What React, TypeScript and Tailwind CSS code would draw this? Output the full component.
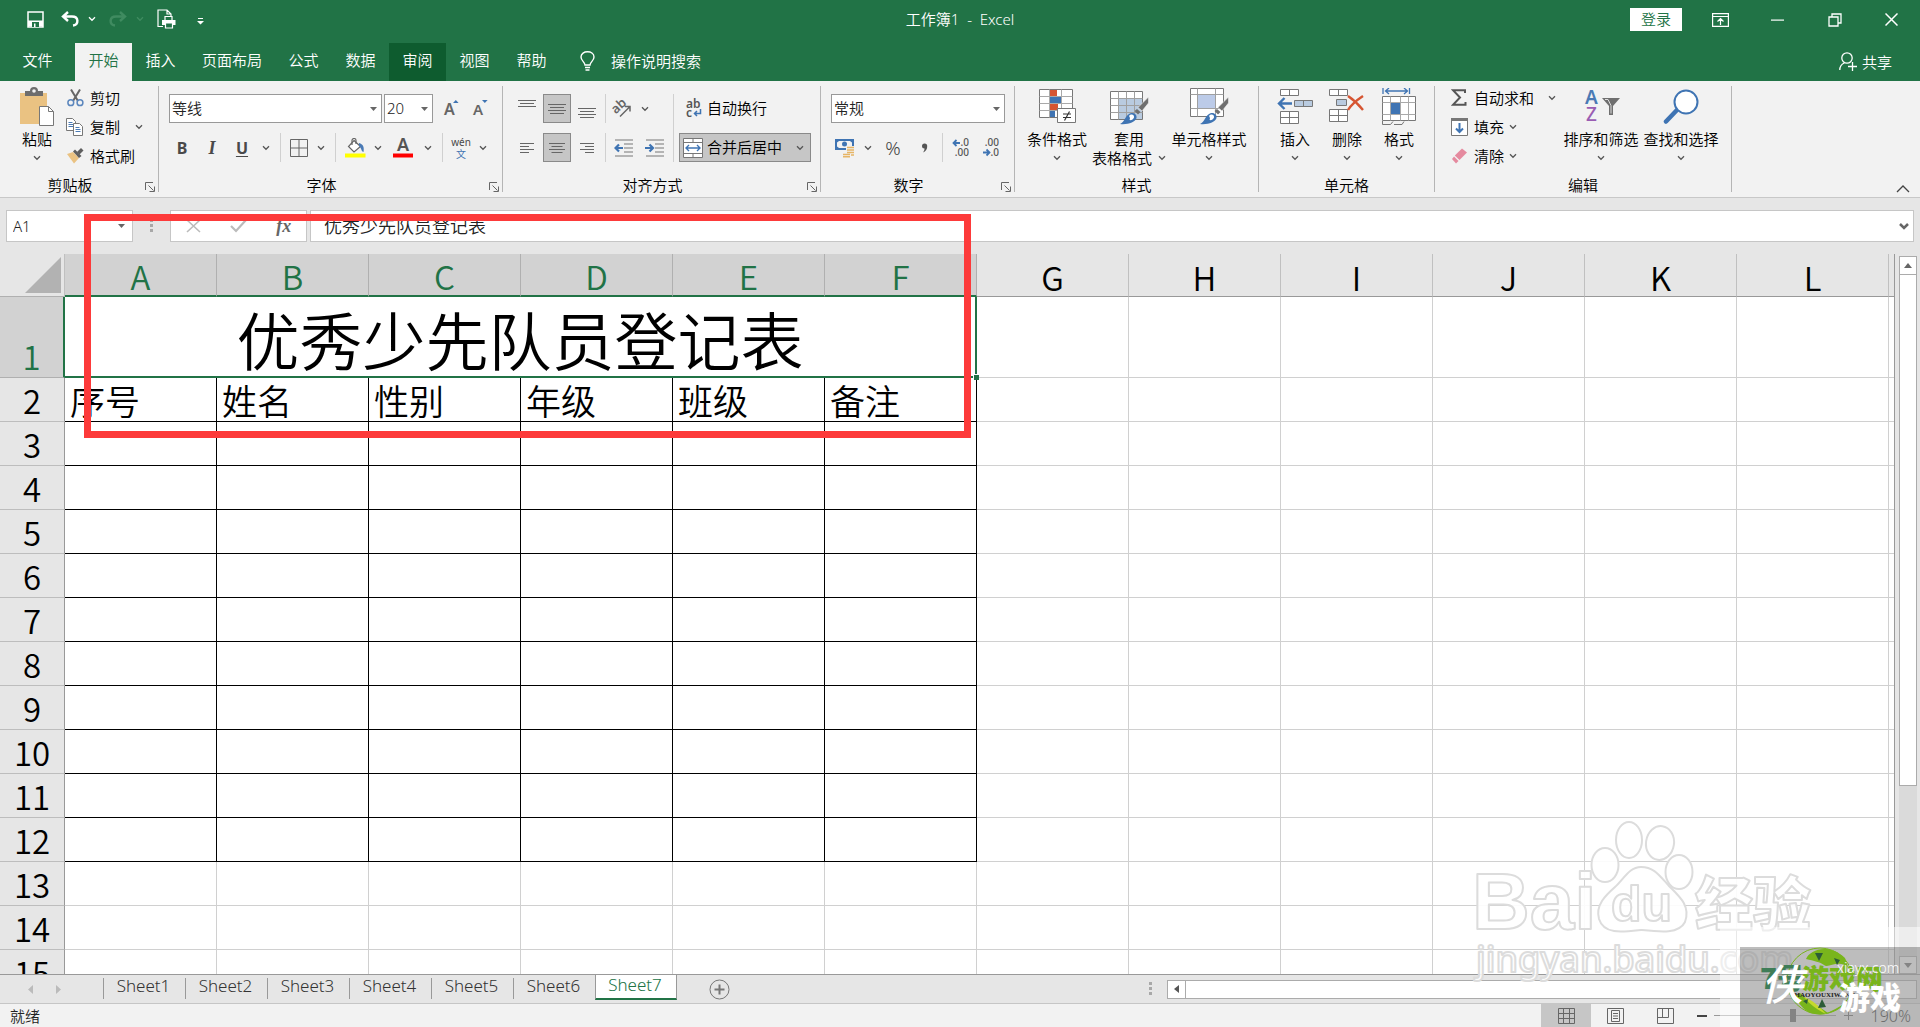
import type { ReactNode } from 'react';

const COLUMNS = ['A', 'B', 'C', 'D', 'E', 'F', 'G', 'H', 'I', 'J', 'K', 'L'];
const TABLE_COLUMNS = 6;
const TABLE_LAST_ROW = 12;
const TITLE = '优秀少先队员登记表';
const HEADINGS = ['序号', '姓名', '性别', '年级', '班级', '备注'];
const SHEETS = ['Sheet1', 'Sheet2', 'Sheet3', 'Sheet4', 'Sheet5', 'Sheet6', 'Sheet7'];

const TABS = [
  { label: '文件', className: 'w-[75px] text-white' },
  { label: '开始', className: 'w-[57px] bg-[#f2f2f2] text-[#217346]' },
  { label: '插入', className: 'w-[57px] text-white' },
  { label: '页面布局', className: 'w-[86px] text-white' },
  { label: '公式', className: 'w-[57px] text-white' },
  { label: '数据', className: 'w-[57px] text-white' },
  { label: '审阅', className: 'w-[57px] bg-[#0e5c2f] text-white' },
  { label: '视图', className: 'w-[57px] text-white' },
  { label: '帮助', className: 'w-[57px] text-white' },
];

/* ---------- small shared pieces ---------- */

function Chevron({ className = 'text-[#555]' }: { className?: string }) {
  return (
    <svg width="8" height="6" viewBox="0 0 8 6" className={className} fill="none" stroke="currentColor" strokeWidth="1.3">
      <path d="M1 1.3 4 4.3 7 1.3" />
    </svg>
  );
}

function Caret() {
  return (
    <svg width="7" height="4" viewBox="0 0 7 4" fill="#666">
      <path d="M0 0h7L3.5 4z" />
    </svg>
  );
}

function Drop({ label }: { label: string }) {
  return (
    <button type="button" aria-label={label} className="flex h-[29px] w-[18px] items-center justify-center">
      <Chevron />
    </button>
  );
}

function Tool({ label, width, active, children }: { label: string; width: string; active?: boolean; children: ReactNode }) {
  return (
    <button
      type="button"
      aria-label={label}
      className={`flex h-[29px] shrink-0 items-center justify-center ${width} ${active ? 'border border-[#8a8a8a] bg-[#c6c6c6]' : ''}`}
    >
      {children}
    </button>
  );
}

function Divider({ className }: { className: string }) {
  return <div className={`w-px shrink-0 bg-[#d0d0d0] ${className}`} />;
}

function Group({ label, width, launcher, children }: { label: string; width: string; launcher?: boolean; children: ReactNode }) {
  return (
    <section aria-label={label} className={`flex shrink-0 flex-col ${width}`}>
      <div className="flex h-[93px]">{children}</div>
      <div className="flex h-[22px] items-center">
        <span className="flex-1 text-center">{label}</span>
        {launcher && (
          <button type="button" aria-label={`${label}设置`} className="flex w-[18px] pt-1">
            <svg width="10" height="10" viewBox="0 0 10 10" fill="none" stroke="#666" strokeWidth="1" className="ml-[5px]">
              <path d="M.5 8V.5H8M3.5 3.5l5 5M9.5 4.5v5h-5" />
            </svg>
          </button>
        )}
      </div>
    </section>
  );
}

function GroupDivider() {
  return <div className="my-[5px] w-px shrink-0 bg-[#b5b5b5]" />;
}

function BigButton({ icon, label, second, width }: { icon: ReactNode; label: string; second?: string; width: string }) {
  return (
    <button type="button" className={`flex shrink-0 flex-col items-center pt-[3px] ${width}`}>
      <span className="flex h-[46px] items-center">{icon}</span>
      <span className="h-[18px] leading-[18px] whitespace-nowrap">{label}</span>
      <span className="flex h-[20px] items-center gap-1.5 leading-[18px] whitespace-nowrap">
        {second}
        <Chevron />
      </span>
    </button>
  );
}

function SmallButton({ icon, label, drop }: { icon: ReactNode; label: string; drop?: string }) {
  return (
    <button type="button" className="flex h-[29px] items-center whitespace-nowrap">
      <span className="mr-[6px] flex w-[18px] justify-center">{icon}</span>
      {label}
      {drop && (
        <span className={drop}>
          <Chevron />
        </span>
      )}
    </button>
  );
}

/* ---------- ribbon icons ---------- */

function PasteIcon() {
  return (
    <svg width="36" height="40" viewBox="0 0 36 40">
      <path d="M1 6h27v31H1z" fill="#eac282" />
      <path d="M6 4h5a4 4 0 0 1 8 0h5v5H6z" fill="#6d6d6d" />
      <circle cx="15" cy="4" r="1.8" fill="#f2f2f2" />
      <path d="M20.500 19.500h9l5 5v14h-14z" fill="#fff" stroke="#777" />
      <path d="M29.500 19.500v5h5" fill="none" stroke="#777" />
    </svg>
  );
}

function CutIcon() {
  return (
    <svg width="17" height="18" viewBox="0 0 17 18" fill="none">
      <path d="M4 .5 11 12M13 .5 6 12" stroke="#666" strokeWidth="2" />
      <circle cx="3.800" cy="13.700" r="2.900" stroke="#5b86bd" strokeWidth="1.500" />
      <circle cx="13" cy="13.700" r="2.900" stroke="#5b86bd" strokeWidth="1.500" />
    </svg>
  );
}

function CopyIcon() {
  return (
    <svg width="18" height="18" viewBox="0 0 18 18" fill="#fff" stroke="#777">
      <path d="M.5.5h6l3 3v9h-9z" />
      <path d="M2.500 4.500h4M2.500 6.500h5M2.500 8.500h5" stroke="#4a7ab5" />
      <path d="M7.500 5.500h6l3 3v9h-9z" />
      <path d="M9.500 9.500h4M9.500 11.500h5M9.500 13.500h5" stroke="#4a7ab5" />
    </svg>
  );
}

function BrushIcon() {
  return (
    <svg width="18" height="16" viewBox="0 0 18 16">
      <path d="M1 6 7 4l6 6-5 5.500z" fill="#eac282" />
      <path d="M7 3.500 9 1.500l6.500 6.500-2.500 2z" fill="#5f5f5f" />
      <path d="m11 4 4-4 2.500 2.500-4 4z" fill="#5f5f5f" />
    </svg>
  );
}

function BordersIcon() {
  return (
    <svg width="18" height="18" viewBox="0 0 18 18" fill="none" stroke="#666" strokeWidth="1">
      <path d="M.5.5h17v17H.5zM9 .5v17M.5 9h17" />
    </svg>
  );
}

function FillColorIcon() {
  return (
    <svg width="21" height="20" viewBox="0 0 21 20">
      <path d="m9 2.500 6.500 6L9 14 3.500 8.500z" fill="#fff" stroke="#666" strokeWidth="1.200" />
      <path d="M7 7V2.500a2 2 0 0 1 4 0V6" fill="none" stroke="#666" strokeWidth="1.200" />
      <path d="M14 5c4 1 5.500 4 4.500 9-2 0-2-4-4.500-6z" fill="#4a7ab5" />
      <path d="M0 15.500h20.500v4H0z" fill="#ff0" />
    </svg>
  );
}

function linesIcon(widths: number[], align: 'left' | 'center' | 'right', offset = 0) {
  return (
    <svg width="18" height="24" viewBox="0 0 18 24" stroke="#666" strokeWidth="1">
      {widths.map((w, i) => {
        const x = align === 'left' ? 2 : align === 'center' ? (18 - w) / 2 : 16 - w;
        return <path key={i} d={`M${x} ${offset + i * 3 + 0.5}h${w}`} />;
      })}
    </svg>
  );
}

function OrientationIcon() {
  return (
    <svg width="20" height="19" viewBox="0 0 20 19" className="overflow-visible">
      <text x="2" y="13" transform="rotate(-42 6 12)" className="fill-[#666] font-['Noto_Sans',sans-serif] text-[13px] font-semibold">
        ab
      </text>
      <path d="M8 17.500 17.500 8M13 7.500h5v5" fill="none" stroke="#666" strokeWidth="1.500" />
    </svg>
  );
}

function IndentIcon({ increase }: { increase?: boolean }) {
  return (
    <svg width="20" height="18" viewBox="0 0 20 18" fill="none">
      <path d="M1 1h18M10 5h9M10 9h9M10 13h9M1 17h18" stroke="#777" strokeWidth="1.200" />
      {increase ? (
        <path d="M0 9h8M4.500 5.500 8 9l-3.500 3.500" stroke="#3f74b3" strokeWidth="2.200" />
      ) : (
        <path d="M9 9H1.500M5 5.500 1.500 9 5 12.500" stroke="#3f74b3" strokeWidth="2.200" />
      )}
    </svg>
  );
}

function WrapIcon() {
  return (
    <svg width="18" height="19" viewBox="0 0 18 19" className="overflow-visible">
      <text x="1" y="9" className="fill-[#555] font-['Noto_Sans',sans-serif] text-[12px] font-semibold">
        ab
      </text>
      <text x="1" y="18" className="fill-[#555] font-['Noto_Sans',sans-serif] text-[12px] font-semibold">
        c
      </text>
      <path d="M15.500 10v4.500H9.500M12 12l-2.500 2.500L12 17" fill="none" stroke="#3f74b3" strokeWidth="1.500" />
    </svg>
  );
}

function MergeIcon() {
  return (
    <svg width="20" height="20" viewBox="0 0 20 20" fill="none" stroke="#777">
      <path d="M.5.5h19v19H.5z" fill="#fff" />
      <path d="M.5 4.500h19M.5 15.500h19M10 .5v4M10 15.500v4" />
      <path d="M3 10h14M6 7l-3 3 3 3M14 7l3 3-3 3" stroke="#3f74b3" strokeWidth="1.400" />
    </svg>
  );
}

function CurrencyIcon() {
  return (
    <svg width="20" height="20" viewBox="0 0 20 20">
      <path d="M0 1h19v11H0z" fill="#3f74b3" />
      <path d="M2 4.500 4 3h11l2 1.500v4L15 10H4L2 8.500z" fill="#f2f2f2" />
      <circle cx="9.500" cy="6" r="2.500" fill="#3f74b3" />
      <path d="M11 8h9v12H7v-6h4z" fill="#f2f2f2" />
      <path d="M12 9.500h7M12 12h7M12 14.500h7M8 16.500h7M8 18.800h7M16 17h3" stroke="#e6b566" strokeWidth="1.600" />
    </svg>
  );
}

function DecimalIcon({ increase }: { increase?: boolean }) {
  return (
    <svg width="18" height="19" viewBox="0 0 18 19" className="overflow-visible">
      <text x="17" y="8" textAnchor="end" className="fill-[#555] font-['Noto_Sans',sans-serif] text-[10px] font-medium">
        {increase ? '.0' : '.00'}
      </text>
      <text x="17" y="18" textAnchor="end" className="fill-[#555] font-['Noto_Sans',sans-serif] text-[10px] font-medium">
        {increase ? '.00' : '.0'}
      </text>
      {increase ? (
        <path d="M8 5H2M4.500 2 1.500 5l3 3" fill="none" stroke="#3f74b3" strokeWidth="1.800" />
      ) : (
        <path d="M1 14.500h6M4.500 11.500l3 3-3 3" fill="none" stroke="#3f74b3" strokeWidth="1.800" />
      )}
    </svg>
  );
}

function ConditionalIcon() {
  return (
    <svg width="36" height="36" viewBox="0 0 36 36" className="overflow-visible">
      <path d="M.5.5h33v28H.5z" fill="#fff" stroke="#777" />
      <path d="M11 1h7v6h-7zM11 15h8v6h-8z" fill="#d65532" />
      <path d="M11 8h11v6H11zM11 22h5v6h-5z" fill="#3f74b3" />
      <path d="M.5 7.500h33M.5 14.500h33M.5 21.500h33M10.500.5v28M22.500.5v28" fill="none" stroke="#a9a9a9" />
      <path d="M18.500 19.500h18v14h-18z" fill="#fff" stroke="#777" />
      <path d="M24 25h8M24 28.500h8M30.500 22.500l-5 9" stroke="#333" strokeWidth="1.200" />
    </svg>
  );
}

function StyleBrush() {
  return (
    <g>
      <path d="M38.500 9v6L32 23l-4-3.500z" fill="#6f6f6f" stroke="#f2f2f2" strokeWidth=".6" />
      <path d="m27 21 3.500 3L28 26.500 24.500 23z" fill="#6f6f6f" />
      <path d="M10 36c5-2 5-9 11-11 4-.5 6 2 5.500 5-1 4-9 7-16.500 6z" fill="#3f74b3" />
      <path d="M19 28c2-2.500 5.500-1.500 5 1.500-.6 2-3 3-4.500 2.500.8-1.500.5-2.600-.5-4z" fill="#fff" />
    </g>
  );
}

function TableStyleIcon() {
  return (
    <svg width="39" height="38" viewBox="0 0 39 38">
      <path d="M.5 3.500h32v28H.5z" fill="#fff" stroke="#777" />
      <path d="M9 10h23v21H9z" fill="#b9cbe0" />
      <path d="M.5 10.500h32M.5 17.500h32M.5 24.500h32M8.500 3.500v28M16.500 3.500v28M24.500 3.500v28" fill="none" stroke="#a0a0a0" />
      <StyleBrush />
    </svg>
  );
}

function CellStyleIcon() {
  return (
    <svg width="39" height="38" viewBox="0 0 39 38">
      <path d="M.5.5h33v28H.5z" fill="#fff" stroke="#777" />
      <path d="M8 7h17v13H8z" fill="#bccbe8" />
      <path d="M.5 6.500h33M.5 20.500h33M7.500.5v28M25.500.5v28" fill="none" stroke="#a0a0a0" />
      <StyleBrush />
    </svg>
  );
}

function InsertCellIcon() {
  return (
    <svg width="36" height="38" viewBox="0 0 36 38" fill="#fff" stroke="#777">
      <path d="M3.500 1.500h18v6h-18zM12.500 1.500v6" />
      <path d="M17.500 12.500h18v6h-18zM26.500 12.500v6" fill="#b9cbe0" />
      <path d="M3.500 23.500h18v12h-18zM12.500 23.500v12M3.500 29.500h18" />
      <path d="M15 15.500H2M7.500 10 2 15.500 7.500 21" fill="none" stroke="#3f74b3" strokeWidth="2.400" />
    </svg>
  );
}

function DeleteCellIcon() {
  return (
    <svg width="36" height="38" viewBox="0 0 36 38" fill="#fff" stroke="#777">
      <path d="M.5 1.500h18v6H.5zM9.500 1.500v6" />
      <path d="M7.500 11.500h10v6h-10z" fill="#b9cbe0" />
      <path d="M.5 21.500h18v12H.5zM9.500 21.500v12M.5 27.500h18" />
      <path d="M19 8c6 4 11 9 15 14M34 8c-6 4-12 9-15 14" fill="none" stroke="#d65532" strokeWidth="2.400" />
    </svg>
  );
}

function FormatCellIcon() {
  return (
    <svg width="35" height="38" viewBox="0 0 35 38" fill="none" stroke="#777">
      <path d="M1 0v6M27.500 0v6M3.500 3h21.500M7 0 3.500 3 7 6M22 0l3.500 3L22 6" stroke="#3f74b3" strokeWidth="1.300" />
      <path d="M.5 8.500h33v24H.5z" fill="#fff" />
      <path d="M.5 14.500h33M.5 26.500h33M8.500 8.500v24M18.500 8.500v24M26.500 8.500v24" stroke="#a9a9a9" />
      <path d="M9 15h9v11H9z" fill="#3f74b3" stroke="none" />
      <path d="M.5 33v3.500h8l2.500-3M12 36.500h8l2-3" />
    </svg>
  );
}

function SumIcon() {
  return (
    <svg width="16" height="17" viewBox="0 0 16 17" fill="none" stroke="#555" strokeWidth="2">
      <path d="M14 4V1.200H2L9 8.500 2 15.800h12.500V13" />
    </svg>
  );
}

function FillDownIcon() {
  return (
    <svg width="17" height="18" viewBox="0 0 17 18" fill="none">
      <path d="M.5.5h16v17H.5z" fill="#fff" stroke="#777" />
      <path d="M0 0h17v3H0z" fill="#777" />
      <path d="M8.500 5v9M5 10.500l3.500 3.500 3.500-3.500" stroke="#3f74b3" strokeWidth="2" />
    </svg>
  );
}

function EraserIcon() {
  return (
    <svg width="17" height="16" viewBox="0 0 17 16">
      <path d="M11 .5 16 4.500 8.500 12 3.800 7.500z" fill="#e58a9f" />
      <path d="M3 8.500 7.500 13 5 15.500 1 11z" fill="#e58a9f" />
    </svg>
  );
}

function SortFilterIcon() {
  return (
    <svg width="36" height="38" viewBox="0 0 36 38" className="overflow-visible">
      <text x="2" y="16" className="fill-[#4a7ab5] font-['Noto_Sans',sans-serif] text-[19px] font-semibold">
        A
      </text>
      <text x="3" y="33" className="fill-[#9a5db3] font-['Noto_Sans',sans-serif] text-[19px] font-medium">
        Z
      </text>
      <path d="M19 10h18l-7 8v9h-4v-9z" fill="#6f6f6f" />
      <path d="M22 11.500h3l3 6v8" fill="none" stroke="#ddd" strokeWidth="1" />
    </svg>
  );
}

function FindIcon() {
  return (
    <svg width="36" height="36" viewBox="0 0 36 36" fill="none" stroke="#3f74b3">
      <path d="M13.500 21.500 3 32.500" strokeWidth="4.500" strokeLinecap="round" />
      <circle cx="23" cy="13" r="11.500" fill="#fff" strokeWidth="2" />
    </svg>
  );
}

/* ---------- window parts ---------- */

function TitleBar() {
  return (
    <header className="grid h-[43px] grid-cols-[1fr_auto_1fr] bg-[#217346] text-white">
      <div className="flex h-[38px] items-center pl-[27px]">
        <button type="button" aria-label="保存">
          <svg width="17" height="17" viewBox="0 0 17 17" fill="none" stroke="#fff" strokeWidth="1.500">
            <path d="M1 1h15v15H1z" />
            <path d="M1 9.500h15v6H1z" fill="#fff" stroke="none" />
            <path d="M5 11h7v5H5z" fill="#217346" stroke="none" />
            <path d="M7 12.500h1.500V16H7z" fill="#fff" stroke="none" />
          </svg>
        </button>
        <button type="button" aria-label="撤消" className="ml-[17px]">
          <svg width="18" height="16" viewBox="0 0 18 16" fill="none" stroke="#fff" strokeWidth="2.400">
            <path d="M7 1 2 5.500 7 10M2.500 5.500H11c7 0 7 8 1 9" />
          </svg>
        </button>
        <button type="button" aria-label="撤消列表" className="ml-[9px]">
          <Chevron className="text-white" />
        </button>
        <button type="button" aria-label="恢复" className="ml-[13px] text-[#3f8b60]">
          <svg width="18" height="16" viewBox="0 0 18 16" fill="none" stroke="currentColor" strokeWidth="2.400">
            <path d="m11 1 5 4.500L11 10M15.500 5.500H7c-7 0-7 8-1 9" />
          </svg>
        </button>
        <button type="button" aria-label="恢复列表" className="ml-[9px]">
          <Chevron className="text-[#3f8b60]" />
        </button>
        <button type="button" aria-label="打印预览" className="ml-[13px]">
          <svg width="19" height="20" viewBox="0 0 19 20" fill="none" stroke="#fff" strokeWidth="1.200">
            <path d="M6 17.500H1V1h9l4 4v3M10 1v4h4M8 11V7.500h7V11" />
            <path d="M5 11h13.500v5H5z" fill="#fff" stroke="none" />
            <path d="M8.500 14h7v5h-7z" fill="#217346" />
          </svg>
        </button>
        <button type="button" aria-label="自定义快速访问工具栏" className="mt-1 ml-[21px]">
          <svg width="7" height="7" viewBox="0 0 7 7" fill="#fff">
            <path d="M1 0h5v1H1zM0 3h7L3.500 6.500z" />
          </svg>
        </button>
      </div>
      <h1 className="flex h-[37px] items-center whitespace-pre">{'工作簿1  -  Excel'}</h1>
      <div className="flex h-[39px] items-center justify-end">
        <button type="button" className="mr-[10px] h-[23px] w-[52px] bg-white leading-[23px] text-[#217346]">
          登录
        </button>
        <button type="button" aria-label="功能区显示选项" className="flex w-[57px] justify-center">
          <svg width="17" height="14" viewBox="0 0 17 14" fill="none" stroke="#fff" strokeWidth="1.200">
            <path d="M.6.600h15.800v12.800H.6zM.6 3.500h15.800M8.500 12V6M5.500 8.500l3-3 3 3" />
          </svg>
        </button>
        <button type="button" aria-label="最小化" className="flex w-[57px] justify-center">
          <svg width="13" height="2" viewBox="0 0 13 2" fill="#fff">
            <path d="M0 .500h13v1.200H0z" />
          </svg>
        </button>
        <button type="button" aria-label="向下还原" className="flex w-[57px] justify-center">
          <svg width="14" height="14" viewBox="0 0 14 14" fill="none" stroke="#fff" strokeWidth="1.300">
            <path d="M1 4h9v9H1zM4 4V1h9v9h-3" />
          </svg>
        </button>
        <button type="button" aria-label="关闭" className="flex w-[57px] justify-center">
          <svg width="13" height="13" viewBox="0 0 13 13" fill="none" stroke="#fff" strokeWidth="1.500">
            <path d="m.5.500 12 12M12.500.500l-12 12" />
          </svg>
        </button>
      </div>
    </header>
  );
}

function TabBar() {
  return (
    <nav className="flex h-[38px] bg-[#217346]">
      {TABS.map(tab => (
        <button key={tab.label} type="button" className={`shrink-0 pb-1 ${tab.className}`}>
          {tab.label}
        </button>
      ))}
      <button type="button" className="ml-[20px] flex items-center gap-[16px] pb-[3px] whitespace-nowrap text-white">
        <svg width="15" height="20" viewBox="0 0 15 20" fill="none" stroke="#fff" strokeWidth="1.400">
          <path d="M5 14c0-3-4-4-4-8 0-7 13-7 13 0 0 4-4 5-4 8z" />
          <path d="M5 16.500h5M5.500 19h4" />
        </svg>
        操作说明搜索
      </button>
      <button type="button" className="mr-[28px] ml-auto flex items-center gap-[5px] pb-px text-white">
        <svg width="18" height="19" viewBox="0 0 18 19" fill="none" stroke="#fff" strokeWidth="1.300">
          <circle cx="8" cy="6" r="5.200" />
          <path d="M.8 18c0-3.500 2-6 4.500-7M13.500 10v9M9 14.500h9" />
        </svg>
        共享
      </button>
    </nav>
  );
}

function Select({ label, value, width }: { label: string; value: string; width: string }) {
  return (
    <div className={`relative h-[29px] ${width}`}>
      <select aria-label={label} className="h-full w-full appearance-none border border-[#999] bg-white pb-px pl-[2px] text-[#222] outline-none">
        <option>{value}</option>
      </select>
      <span className="pointer-events-none absolute inset-y-0 right-[5px] flex items-center">
        <Caret />
      </span>
    </div>
  );
}

function Ribbon() {
  return (
    <div className="flex h-[117px] border-b border-[#c8c8c8] bg-[#f2f2f2] text-black">
      <Group label="剪贴板" width="w-[158px]" launcher>
        <BigButton icon={<PasteIcon />} label="粘贴" width="w-[54px] ml-[10px]" />
        <div className="ml-[2px] flex flex-col items-start pt-[2px]">
          <SmallButton icon={<CutIcon />} label="剪切" />
          <SmallButton icon={<CopyIcon />} label="复制" drop="ml-[15px]" />
          <SmallButton icon={<BrushIcon />} label="格式刷" />
        </div>
      </Group>
      <GroupDivider />

      <Group label="字体" width="w-[343px]" launcher>
        <div className="flex flex-col gap-[10px] pt-[13px] pl-2">
          <div className="flex pl-[2px]">
            <Select label="字体" value="等线" width="w-[213px]" />
            <div className="ml-[2px]">
              <Select label="字号" value="20" width="w-[49px]" />
            </div>
            <div className="ml-[3px] flex text-[#555]">
              <Tool label="增大字号" width="w-[29px]">
                <svg width="17" height="18" viewBox="0 0 17 18" className="overflow-visible">
                  <text x="2" y="15" className="fill-[#666] font-['Noto_Sans',sans-serif] text-[16px] font-semibold">
                    A
                  </text>
                  <path d="m11 3 2.800-3 2.800 3z" fill="#3f74b3" />
                </svg>
              </Tool>
              <Tool label="减小字号" width="w-[29px]">
                <svg width="17" height="18" viewBox="0 0 17 18" className="overflow-visible">
                  <text x="2" y="15" className="fill-[#666] font-['Noto_Sans',sans-serif] text-[15px] font-semibold">
                    A
                  </text>
                  <path d="m11 0 2.800 3 2.800-3z" fill="#3f74b3" />
                </svg>
              </Tool>
            </div>
          </div>
          <div className="flex text-[16px] text-[#4a4a4a]">
            <Tool label="加粗" width="w-[30px]">
              <b>B</b>
            </Tool>
            <Tool label="倾斜" width="w-[30px]">
              <b className="font-['Liberation_Serif',serif] text-[18px] italic">I</b>
            </Tool>
            <Tool label="下划线" width="w-[30px]">
              <b className="underline underline-offset-2">U</b>
            </Tool>
            <Drop label="下划线样式" />
            <Divider className="mx-[5px]" />
            <Tool label="边框" width="w-[26px]">
              <BordersIcon />
            </Tool>
            <Drop label="边框样式" />
            <Divider className="mx-[5px]" />
            <Tool label="填充颜色" width="w-[28px]">
              <FillColorIcon />
            </Tool>
            <Drop label="选择填充颜色" />
            <Tool label="字体颜色" width="w-[32px]">
              <svg width="20" height="20" viewBox="0 0 20 20" className="overflow-visible">
                <text x="10" y="13" textAnchor="middle" className="fill-[#555] font-['Noto_Sans',sans-serif] text-[18px] font-semibold">
                  A
                </text>
                <path d="M0 15.500h20v4H0z" fill="red" />
              </svg>
            </Tool>
            <Drop label="选择字体颜色" />
            <Divider className="mx-[5px]" />
            <Tool label="拼音" width="w-[26px]">
              <span className="flex flex-col items-center text-[10px] leading-[12px] font-normal">
                <span>wén</span>
                <span className="text-[#3f74b3]">文</span>
              </span>
            </Tool>
            <Drop label="拼音选项" />
          </div>
        </div>
      </Group>
      <GroupDivider />

      <Group label="对齐方式" width="w-[317px]" launcher>
        <div className="flex w-[167px] flex-col gap-[10px] pt-[13px] pl-2">
          <div className="flex">
            <Tool label="顶端对齐" width="w-[32px]">
              {linesIcon([18, 14, 18], 'center', 3)}
            </Tool>
            <Tool label="垂直居中" width="w-[28px]" active>
              {linesIcon([18, 14, 18, 14], 'center', 7)}
            </Tool>
            <Tool label="底端对齐" width="w-[32px]">
              {linesIcon([18, 14, 18, 14], 'center', 11)}
            </Tool>
            <Divider className="mx-[2px]" />
            <Tool label="方向" width="w-[28px]">
              <OrientationIcon />
            </Tool>
            <Drop label="方向选项" />
          </div>
          <div className="flex">
            <Tool label="左对齐" width="w-[32px]">
              {linesIcon([14, 9, 14, 9], 'left', 7)}
            </Tool>
            <Tool label="居中" width="w-[28px]" active>
              {linesIcon([16, 11, 16, 11], 'center', 7)}
            </Tool>
            <Tool label="右对齐" width="w-[32px]">
              {linesIcon([14, 9, 14, 9], 'right', 7)}
            </Tool>
            <Divider className="mx-[2px]" />
            <Tool label="减少缩进量" width="w-[32px]">
              <IndentIcon />
            </Tool>
            <Tool label="增加缩进量" width="w-[29px]">
              <IndentIcon increase />
            </Tool>
          </div>
        </div>
        <Divider className="mt-[13px] mr-[5px] ml-[3px] h-[68px]" />
        <div className="flex flex-col gap-[10px] pt-[13px]">
          <button type="button" className="flex h-[29px] items-center gap-[4px] pb-px pl-[6px] whitespace-nowrap">
            <WrapIcon />
            自动换行
          </button>
          <button type="button" className="flex h-[29px] w-[132px] items-center border border-[#8a8a8a] bg-[#c6c6c6] pl-[3px] whitespace-nowrap">
            <MergeIcon />
            <span className="ml-[4px] pb-px">合并后居中</span>
            <span className="ml-[14px]">
              <Chevron />
            </span>
          </button>
        </div>
      </Group>
      <GroupDivider />

      <Group label="数字" width="w-[193px]" launcher>
        <div className="flex flex-col gap-[10px] pt-[13px] pl-[10px]">
          <Select label="数字格式" value="常规" width="w-[174px]" />
          <div className="flex">
            <Tool label="会计数字格式" width="w-[28px]">
              <CurrencyIcon />
            </Tool>
            <Drop label="货币选项" />
            <Tool label="百分比样式" width="w-[32px]">
              <span className="text-[19px] text-[#444]">%</span>
            </Tool>
            <Tool label="千位分隔样式" width="w-[30px]">
              <svg width="7" height="10" viewBox="0 0 7 10" fill="#555">
                <path d="M1 3a2.500 2.500 0 0 1 5.200 0c.2 3-1.500 5.600-4.200 6.500 1-1.500 1.600-2.800 1.500-4A2.500 2.500 0 0 1 1 3z" />
              </svg>
            </Tool>
            <Divider className="mx-[3px]" />
            <Tool label="增加小数位数" width="w-[30px]">
              <DecimalIcon increase />
            </Tool>
            <Tool label="减少小数位数" width="w-[30px]">
              <DecimalIcon />
            </Tool>
          </div>
        </div>
      </Group>
      <GroupDivider />

      <Group label="样式" width="w-[243px]">
        <BigButton icon={<ConditionalIcon />} label="条件格式" width="w-[72px] ml-[6px]" />
        <BigButton icon={<TableStyleIcon />} label="套用" second="表格格式" width="w-[72px]" />
        <BigButton icon={<CellStyleIcon />} label="单元格样式" width="w-[80px] ml-1" />
      </Group>
      <GroupDivider />

      <Group label="单元格" width="w-[175px]">
        <BigButton icon={<InsertCellIcon />} label="插入" width="w-[52px] ml-[10px]" />
        <BigButton icon={<DeleteCellIcon />} label="删除" width="w-[52px]" />
        <BigButton icon={<FormatCellIcon />} label="格式" width="w-[52px]" />
      </Group>
      <GroupDivider />

      <Group label="编辑" width="w-[296px]">
        <div className="ml-[15px] flex w-[111px] flex-col items-start pt-[2px]">
          <SmallButton icon={<SumIcon />} label="自动求和" drop="ml-[14px]" />
          <SmallButton icon={<FillDownIcon />} label="填充" drop="ml-[5px]" />
          <SmallButton icon={<EraserIcon />} label="清除" drop="ml-[5px]" />
        </div>
        <BigButton icon={<SortFilterIcon />} label="排序和筛选" width="w-[80px]" />
        <BigButton icon={<FindIcon />} label="查找和选择" width="w-[80px]" />
      </Group>
      <GroupDivider />

      <button type="button" aria-label="折叠功能区" className="mr-[10px] mb-[4px] ml-auto self-end">
        <svg width="14" height="8" viewBox="0 0 14 8" fill="none" stroke="#444" strokeWidth="1.300">
          <path d="m1 7 6-6 6 6" />
        </svg>
      </button>
    </div>
  );
}

function FormulaBar() {
  return (
    <div className="flex h-[56px] items-start bg-[#e6e6e6] pt-3 pr-[6px] pl-[6px]">
      <div className="flex h-[32px] w-[127px] items-center border border-[#c6c6c6] bg-white pr-[7px] pl-[6px]">
        <input aria-label="名称框" defaultValue="A1" className="w-full min-w-0 text-[15px] text-[#222] outline-none" />
        <button type="button" aria-label="名称列表">
          <Caret />
        </button>
      </div>
      <div className="flex h-[32px] w-[37px] items-center justify-center">
        <svg width="4" height="14" viewBox="0 0 4 14" fill="#a8a8a8">
          <path d="M0 0h3v3H0zM0 5h3v3H0zM0 10h3v3H0z" />
        </svg>
      </div>
      <div className="flex h-[32px] w-[137px] items-center justify-around border border-[#c6c6c6] bg-white">
        <button type="button" aria-label="取消">
          <svg width="15" height="14" viewBox="0 0 15 14" fill="none" stroke="#bbb" strokeWidth="1.600">
            <path d="m1 1 13 12M14 1 1 13" />
          </svg>
        </button>
        <button type="button" aria-label="输入">
          <svg width="17" height="14" viewBox="0 0 17 14" fill="none" stroke="#bbb" strokeWidth="2.200">
            <path d="m1 7 5 5L16 1" />
          </svg>
        </button>
        <button type="button" aria-label="插入函数" className="font-['Liberation_Serif',serif] text-[18px] leading-[20px] font-bold text-[#666] italic">
          fx
        </button>
      </div>
      <div className="ml-[3px] flex h-[32px] flex-1 items-center border border-[#c6c6c6] bg-white pr-[4px] pl-[13px]">
        <input aria-label="编辑栏" defaultValue={TITLE} className="w-full pb-px text-[18px] text-[#222] outline-none" />
        <button type="button" aria-label="展开编辑栏">
          <svg width="10" height="7" viewBox="0 0 10 7" fill="none" stroke="#666" strokeWidth="2.500">
            <path d="m1 1 4 4 4-4" />
          </svg>
        </button>
      </div>
    </div>
  );
}

function rowLabelClass(selected: boolean) {
  return selected
    ? 'border-r-2 border-r-[#217346] border-b-[#b0b0b0] bg-[#d2d2d2] text-[#217346]'
    : 'border-r border-r-[#999] border-b-[#bdbdbd] bg-[#e6e6e6] text-black';
}

function cellClass(row: number, col: number) {
  const inTable = row <= TABLE_LAST_ROW && col < TABLE_COLUMNS;
  return inTable ? 'border-black' : 'border-[#d0d0d0]';
}

function Grid() {
  const rows = Array.from({ length: 14 }, (_, i) => i + 2);
  return (
    <div className="h-full flex-1 overflow-hidden border-r border-[#999] bg-white">
      <table className="w-[2041px] table-fixed border-separate border-spacing-0 text-[33px] leading-[38px] font-[350]">
        <colgroup>
          <col className="w-[65px]" />
          {COLUMNS.map(c => (
            <col key={c} className="w-[152px]" />
          ))}
          <col className="w-[152px]" />
        </colgroup>
        <thead>
          <tr className="h-[43px] bg-[#e6e6e6]">
            <td className="border-r border-b border-r-[#c0c0c0] border-b-[#b0b0b0] p-0">
              <svg width="36" height="36" viewBox="0 0 36 36" className="mr-[3px] ml-auto" fill="#b2b2b2">
                <path d="M36 0v36H0z" />
              </svg>
            </td>
            {COLUMNS.map((c, i) => (
              <th
                key={c}
                scope="col"
                className={`border-r p-0 pt-[3px] font-[350] ${
                  i < TABLE_COLUMNS
                    ? 'border-b-2 border-r-[#b0b0b0] border-b-[#217346] bg-[#d2d2d2] text-[#217346]'
                    : 'border-b border-r-[#c0c0c0] border-b-[#999] text-black'
                }`}
              >
                {c}
              </th>
            ))}
            <td className="border-b border-[#999]" />
          </tr>
        </thead>
        <tbody>
          <tr className="h-[81px]">
            <th scope="row" className={`border-b p-0 pb-[2px] align-bottom font-[350] ${rowLabelClass(true)}`}>
              1
            </th>
            <td colSpan={TABLE_COLUMNS} className="relative border-r-2 border-b-2 border-[#217346] p-0 pt-[3px] text-center text-[63px] leading-[70px] text-black">
              {TITLE}
              {/* fill handle */}
              <span className="absolute -right-1 -bottom-1 size-[6px] border-t border-l border-white bg-[#217346]" />
            </td>
            {COLUMNS.slice(TABLE_COLUMNS).map(c => (
              <td key={c} className="border-r border-b border-[#d0d0d0]" />
            ))}
            <td className="border-b border-[#d0d0d0]" />
          </tr>
          {rows.map(row => (
            <tr key={row} className="h-[44px]">
              <th scope="row" className={`border-b p-0 font-[350] ${rowLabelClass(false)}`}>
                {row}
              </th>
              {COLUMNS.map((c, i) => (
                <td key={c} className={`border-r border-b p-0 pl-[5px] text-[35px] text-black ${cellClass(row, i)}`}>
                  {row === 2 ? HEADINGS[i] : null}
                </td>
              ))}
              <td className="border-b border-[#d0d0d0]" />
            </tr>
          ))}
        </tbody>
      </table>
    </div>
  );
}

function VerticalScroll() {
  return (
    <div className="flex w-[25px] flex-col bg-[#e6e6e6] pt-[2px] pr-[3px] pl-[4px]">
      <button type="button" aria-label="向上滚动" className="flex h-[19px] items-center justify-center border border-[#ababab] bg-white">
        <svg width="8" height="5" viewBox="0 0 8 5" fill="#666">
          <path d="M0 5h8L4 0z" />
        </svg>
      </button>
      <div className="flex flex-1 flex-col bg-[#dadada]">
        <div className="h-3/4 border border-t-0 border-[#ababab] bg-white" />
      </div>
      <button type="button" aria-label="向下滚动" className="flex h-[18px] items-center justify-center border border-[#ababab] bg-white">
        <svg width="8" height="5" viewBox="0 0 8 5" fill="#666">
          <path d="M0 0h8L4 5z" />
        </svg>
      </button>
    </div>
  );
}

function SheetTabs() {
  return (
    <div className="flex h-[30px] border-t border-b border-t-[#999] border-b-[#c6c6c6] bg-[#e6e6e6] text-[17px] text-[#333]">
      <div className="flex w-[103px] shrink-0 items-center gap-[23px] pl-[28px]">
        <button type="button" aria-label="上一个工作表">
          <svg width="5" height="9" viewBox="0 0 5 9" fill="#bbb">
            <path d="M5 0v9L0 4.500z" />
          </svg>
        </button>
        <button type="button" aria-label="下一个工作表">
          <svg width="5" height="9" viewBox="0 0 5 9" fill="#bbb">
            <path d="M0 0v9l5-4.500z" />
          </svg>
        </button>
      </div>
      {SHEETS.map(sheet => (
        <button
          key={sheet}
          type="button"
          className={`w-[82px] shrink-0 border-l pr-[2px] leading-[16px] ${
            sheet === 'Sheet7'
              ? 'h-[25px] border-r border-b-2 border-x-[#999] border-b-[#217346] bg-white pb-[4px] text-[#217346]'
              : 'mt-[3px] mb-[4px] border-[#999] pb-[7px]'
          }`}
        >
          {sheet}
        </button>
      ))}
      <button type="button" aria-label="新工作表" className="ml-[32px]">
        <svg width="21" height="21" viewBox="0 0 21 21" fill="none" stroke="#777">
          <circle cx="10.500" cy="10.500" r="9.500" />
          <path d="M10.500 5.500v10M5.500 10.500h10" strokeWidth="2" />
        </svg>
      </button>
      <div className="ml-auto flex w-[771px] items-center pr-[3px]">
        <svg width="4" height="14" viewBox="0 0 4 14" fill="#a8a8a8">
          <path d="M0 0h3v3H0zM0 5h3v3H0zM0 10h3v3H0z" />
        </svg>
        <button type="button" aria-label="向左滚动" className="ml-[14px] flex h-[19px] w-[19px] items-center justify-center border border-[#ababab] bg-white">
          <svg width="5" height="8" viewBox="0 0 5 8" fill="#555">
            <path d="M5 0v8L0 4z" />
          </svg>
        </button>
        <div className="h-[19px] flex-1 border border-l-0 border-[#ababab] bg-white" />
      </div>
    </div>
  );
}

function StatusBar() {
  return (
    <footer className="flex h-[23px] items-center bg-[#f2f2f2] pl-[10px] text-[#222]">
      <span>就绪</span>
      <div className="ml-auto flex h-full items-center">
        <button type="button" aria-label="普通" className="flex h-full w-[50px] items-center justify-center bg-[#c6c6c6]">
          <svg width="17" height="16" viewBox="0 0 17 16" fill="none" stroke="#666">
            <path d="M.5.500h16v15H.500zM.5 5.500h16M.5 10.500h16M5.500.500v15M11.500.500v15" />
          </svg>
        </button>
        <button type="button" aria-label="页面布局视图" className="flex w-[49px] justify-center">
          <svg width="17" height="16" viewBox="0 0 17 16" fill="none" stroke="#666">
            <path d="M.5.500h16v15H.500zM4.500 2.500h8v11h-8zM6 5.500h5M6 8h5M6 10.500h5" />
          </svg>
        </button>
        <button type="button" aria-label="分页预览" className="flex w-[50px] justify-center">
          <svg width="17" height="16" viewBox="0 0 17 16" fill="none" stroke="#666">
            <path d="M.5.500h16v15H.500zM.5 9.500h11v-9M5.500.500v9" />
          </svg>
        </button>
        <button type="button" aria-label="缩小" className="ml-[7px] h-[2px] w-[10px] bg-[#444]" />
        <label className="ml-[7px] flex h-full w-[122px] items-center">
          <input
            type="range"
            aria-label="缩放"
            min={10}
            max={400}
            defaultValue={265}
            className="h-px w-full appearance-none bg-[#999] [&::-webkit-slider-thumb]:h-[13px] [&::-webkit-slider-thumb]:w-[6px] [&::-webkit-slider-thumb]:appearance-none [&::-webkit-slider-thumb]:bg-[#666]"
          />
        </label>
        <button type="button" aria-label="放大" className="ml-[8px]">
          <svg width="9" height="9" viewBox="0 0 9 9" stroke="#666">
            <path d="M4.500 0v9M0 4.500h9" />
          </svg>
        </button>
        <span className="w-[67px] pr-[9px] text-right text-[16px]">190%</span>
      </div>
    </footer>
  );
}

/* ---------- watermarks laid over the sheet ---------- */

function BaiduMark() {
  return (
    <svg
      aria-hidden="true"
      width="350"
      height="170"
      viewBox="0 0 350 170"
      className="pointer-events-none absolute right-[100px] bottom-[40px] overflow-visible"
      fill="#fff"
      stroke="#dcdcdc"
      strokeWidth="2"
      strokeLinejoin="round"
    >
      <g fillOpacity=".9">
        <text x="2" y="112" className="font-['Liberation_Sans',Arial,sans-serif] text-[80px] font-bold">
          Bai
        </text>
        <ellipse cx="135" cy="48" rx="13.500" ry="17" />
        <ellipse cx="159" cy="23" rx="13" ry="18" />
        <ellipse cx="190" cy="26" rx="14" ry="17" transform="rotate(8 190 26)" />
        <ellipse cx="209" cy="55" rx="13.500" ry="17" />
        <path d="M171 50c-12 0-17 12-26 20s-20 18-16 32c5 16 24 13 42 11 20 2 38 4 44-8 6-16-6-26-16-36-10-11-15-19-28-19z" />
        <text x="141" y="104" className="font-['Liberation_Sans',Arial,sans-serif] text-[50px] font-bold">
          du
        </text>
        <text x="225" y="108" className="font-['Noto_Sans_CJK_SC',sans-serif] text-[58px] font-black">
          经验
        </text>
        <text x="6" y="155" className="font-['Noto_Sans',sans-serif] text-[36px] font-medium">
          jingyan.baidu.com
        </text>
      </g>
    </svg>
  );
}

function SiteBadge() {
  return (
    <div aria-hidden="true" className="pointer-events-none absolute right-0 bottom-0 h-[100px] w-[200px] bg-white/50">
      <svg width="180" height="80" viewBox="0 0 180 80" className="absolute right-0 bottom-0">
        <path d="M0 0h180v80H0z" fill="#000" fillOpacity=".26" />
        <circle cx="80" cy="34" r="33" fill="none" stroke="#79b51c" strokeWidth="1" />
        <path d="M66 12C70 2 90-4 105 11l3 9C98 12 88 22 84 18c-4-3-10-4-18-6z" fill="#79b51c" />
        <path d="M60 46c8 8 14 10 28 20 6-4 14-6 20-14-8 14-24 18-38 14-6-3-12-10-15-17z" fill="#79b51c" />
        <path d="M64 50c8 3 14 8 22 17-8-4-16-9-22-17z" fill="#c5d92d" />
        <path d="M75 6h8l-4 8zM94 11l6 2-3 5zM63 54l5-2-1 5zM78 61l4-9 4 8z" fill="#2c5c38" />
        <text x="20" y="42" className="fill-[#3f7d58] font-['Noto_Sans_CJK_SC',sans-serif] text-[28px] font-black">
          7号
        </text>
        <text x="62" y="42" className="fill-[#79b51c] font-['Noto_Sans_CJK_SC',sans-serif] text-[27px] font-black">
          游戏网
        </text>
        <text x="51" y="50" className="fill-[#222] font-['Liberation_Serif',serif] text-[7px] font-bold">
          7HAOYOUXIWANG
        </text>
        <text x="21" y="53" className="fill-white font-['Noto_Sans_CJK_SC',sans-serif] text-[42px] font-medium italic">
          侠
        </text>
        <text x="99" y="62" className="fill-white font-['Noto_Sans_CJK_SC',sans-serif] text-[31px] font-black">
          游戏
        </text>
        <text x="97" y="26" className="fill-white font-['Noto_Sans',sans-serif] text-[14px]">
          xiayx.com
        </text>
      </svg>
    </div>
  );
}

export default function App() {
  return (
    <div className="relative flex h-screen min-h-[600px] flex-col overflow-hidden bg-[#e6e6e6] font-['Noto_Sans','Noto_Sans_CJK_SC',sans-serif] text-[15px] leading-[20px] font-[350]">
      <TitleBar />
      <TabBar />
      <Ribbon />
      <FormulaBar />
      <main className="flex min-h-0 flex-1 font-['Noto_Sans_CJK_SC',sans-serif]">
        <Grid />
        <VerticalScroll />
      </main>
      <SheetTabs />
      <StatusBar />

      <BaiduMark />
      {/* annotation frame around the table heading */}
      <div className="pointer-events-none absolute top-[214px] left-[84px] h-[224px] w-[887px] border-[7px] border-[#fd3a3a]" />
      <SiteBadge />
    </div>
  );
}
